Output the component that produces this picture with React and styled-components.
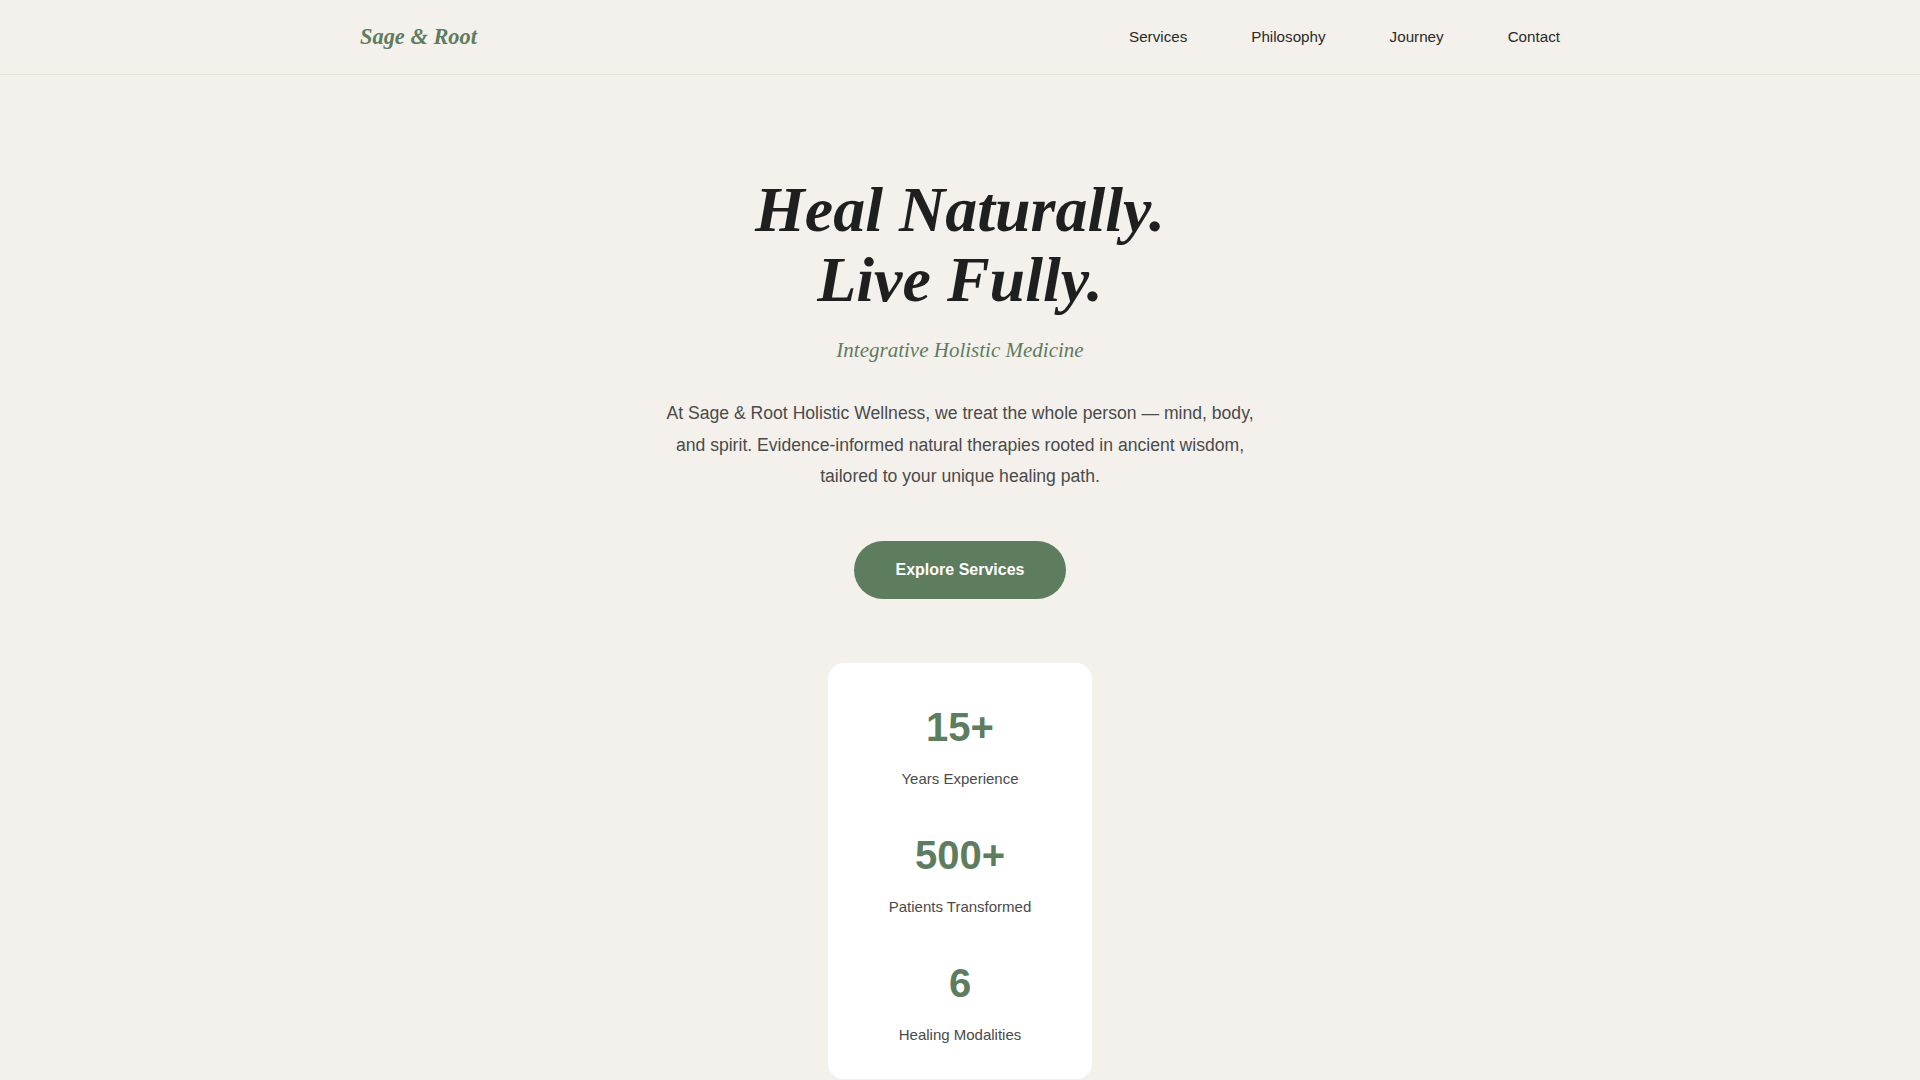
import React from 'react'
import styled, { createGlobalStyle } from 'styled-components'

const GlobalStyle = createGlobalStyle`
  * {
    box-sizing: border-box;
  }
  body {
    margin: 0;
    background: #f4f1ec;
    font-family: 'Liberation Sans', Arial, sans-serif;
    color: #2a2a2a;
  }
`

const Header = styled.header`
  border-bottom: 1px solid #e7e1d5;
`

const HeaderInner = styled.div`
  max-width: 1200px;
  margin: 0 auto;
  padding: 24px 0;
  display: flex;
  align-items: center;
  justify-content: space-between;
`

const Logo = styled.a`
  font-family: 'Liberation Serif', 'Times New Roman', serif;
  font-style: italic;
  font-weight: bold;
  font-size: 22.4px;
  line-height: 26px;
  color: #5e7c5e;
  text-decoration: none;
`

const Nav = styled.nav`
  display: flex;
  gap: 64px;
  margin-top: -2px;
`

const NavLink = styled.a`
  font-size: 15.2px;
  color: #2a2a2a;
  text-decoration: none;
`

const Hero = styled.section`
  display: flex;
  flex-direction: column;
  align-items: center;
  text-align: center;
  padding-top: 100px;
`

const Title = styled.h1`
  margin: 0 0 22px 0;
  font-family: 'Liberation Serif', 'Times New Roman', serif;
  font-style: italic;
  font-weight: bold;
  font-size: 64px;
  line-height: 1.1;
  color: #1f1f1f;
`

const Subtitle = styled.p`
  margin: 0 0 36px 0;
  font-family: 'Liberation Serif', 'Times New Roman', serif;
  font-style: italic;
  font-size: 21px;
  line-height: 1.15;
  color: #5e7c5e;
`

const Intro = styled.p`
  margin: 0 0 48px 0;
  max-width: 600px;
  font-size: 17.6px;
  line-height: 1.8;
  color: #4a4a4a;
`

const Button = styled.a`
  display: inline-block;
  padding: 20px 42px;
  border-radius: 999px;
  background: #5e7c5e;
  color: #ffffff;
  font-size: 16px;
  font-weight: bold;
  line-height: 18px;
  text-decoration: none;
`

const StatsCard = styled.div`
  margin-top: 64px;
  width: 264px;
  padding: 40px 0 32px;
  background: #ffffff;
  border-radius: 16px;
  display: flex;
  flex-direction: column;
  gap: 40px;
`

const Stat = styled.div`
  display: flex;
  flex-direction: column;
  align-items: center;
`

const StatNumber = styled.div`
  font-size: 40px;
  font-weight: bold;
  line-height: 48px;
  color: #5e7c5e;
`

const StatLabel = styled.div`
  margin-top: 16px;
  font-size: 15px;
  line-height: 24px;
  color: #4a4a4a;
`

const stats = [
  { value: '15+', label: 'Years Experience' },
  { value: '500+', label: 'Patients Transformed' },
  { value: '6', label: 'Healing Modalities' },
]

const App = () => {
  return (
    <>
      <GlobalStyle />
      <Header>
        <HeaderInner>
          <Logo href="#">Sage &amp; Root</Logo>
          <Nav>
            <NavLink href="#">Services</NavLink>
            <NavLink href="#">Philosophy</NavLink>
            <NavLink href="#">Journey</NavLink>
            <NavLink href="#">Contact</NavLink>
          </Nav>
        </HeaderInner>
      </Header>
      <Hero>
        <Title>
          Heal Naturally.
          <br />
          Live Fully.
        </Title>
        <Subtitle>Integrative Holistic Medicine</Subtitle>
        <Intro>
          At Sage &amp; Root Holistic Wellness, we treat the whole person — mind, body, and
          spirit. Evidence-informed natural therapies rooted in ancient wisdom, tailored to
          your unique healing path.
        </Intro>
        <Button href="#">Explore Services</Button>
        <StatsCard>
          {stats.map((s) => (
            <Stat key={s.label}>
              <StatNumber>{s.value}</StatNumber>
              <StatLabel>{s.label}</StatLabel>
            </Stat>
          ))}
        </StatsCard>
      </Hero>
    </>
  )
}

export default App
